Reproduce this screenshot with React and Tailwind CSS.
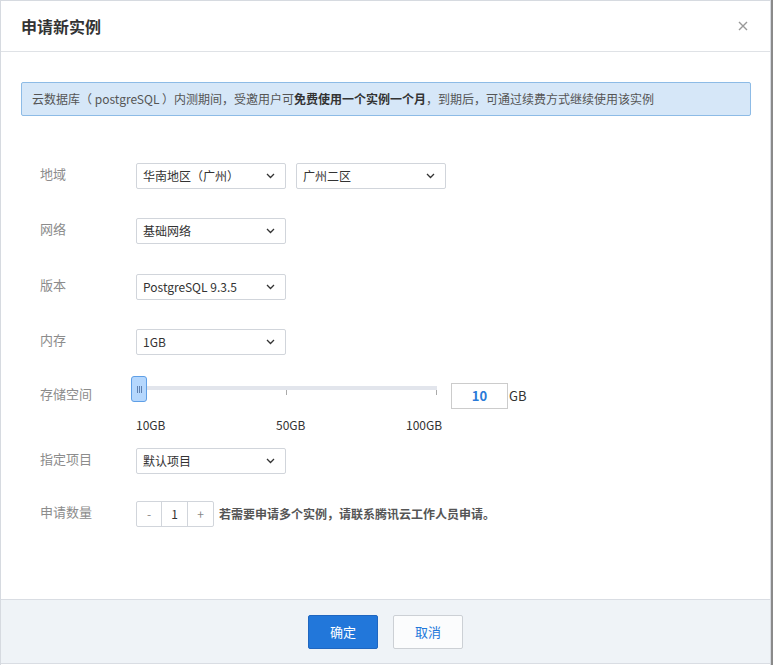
import React from "react";

const font = { fontFamily: '"Noto Sans CJK SC", "Noto Sans", sans-serif' };

function Chevron() {
  return (
    <svg width="9" height="6" viewBox="0 0 9 6" className="shrink-0">
      <path d="M1 1 L4.5 4.5 L8 1" fill="none" stroke="#333" strokeWidth="1.3" />
    </svg>
  );
}

function Select({ text, w = "w-[150px]" }) {
  return (
    <div className={`${w} h-[26px] border border-[#d1d5db] rounded-[2px] bg-white flex items-center justify-between pl-[6px] pr-[10px] text-[12px] text-[#333]`}>
      <span>{text}</span>
      <Chevron />
    </div>
  );
}

function Row({ label, children, className = "" }) {
  return (
    <div className={`flex items-center ${className}`}>
      <div className="w-[96px] text-[13px] text-[#8c8c8c] -mt-[4px]">{label}</div>
      {children}
    </div>
  );
}

export default function App() {
  return (
    <div className="flex bg-white" style={font}>
      <div className="w-[771px] h-[665px] border border-[#d6dae0] border-b-0 flex flex-col">
        <div className="h-[51px] border-b border-[#dfe2e6] flex items-center justify-between pl-[20px] pr-[22px] shrink-0">
          <span className="text-[16px] font-bold text-[#333] -mt-[1px]">申请新实例</span>
          <svg width="10" height="10" viewBox="0 0 10 10">
            <path d="M1 1 L9 9 M9 1 L1 9" stroke="#999" strokeWidth="1.4" />
          </svg>
        </div>
        <div className="h-[547px] pl-[20px] pr-[19px] pt-[30px] shrink-0">
          <div className="h-[34px] border border-[#8dbbe6] bg-[#d6e7f8] rounded-[2px] flex items-center pl-[10px] text-[12px] text-[#555]">
            <span>云数据库（ postgreSQL ）内测期间，受邀用户可</span>
            <span className="font-bold text-[#333]">免费使用一个实例一个月</span>
            <span>，到期后，可通过续费方式继续使用该实例</span>
          </div>
          <div className="pl-[19px] pt-[47px]">
            <Row label="地域" className="mb-[29px]">
              <div className="flex gap-[10px]">
                <Select text="华南地区（广州）" />
                <Select text="广州二区" />
              </div>
            </Row>
            <Row label="网络" className="mb-[30px]">
              <Select text="基础网络" />
            </Row>
            <Row label="版本" className="mb-[29px]">
              <Select text="PostgreSQL 9.3.5" />
            </Row>
            <Row label="内存" className="mb-[21px]">
              <Select text="1GB" />
            </Row>
            <div className="flex h-[72px]">
              <div className="w-[96px] text-[13px] text-[#8c8c8c] pt-[8px]">存储空间</div>
              <div className="flex flex-col">
                <div className="flex items-start">
                  <div className="relative w-[301px] h-[26px]">
                    <div className="absolute left-[10px] right-0 top-[10px] h-[4px] bg-[#e2e5ec]" />
                    <div className="absolute left-[150px] top-[14px] w-px h-[5px] bg-[#aaa]" />
                    <div className="absolute left-[300px] top-[14px] w-px h-[5px] bg-[#aaa]" />
                    <div className="absolute left-[-5px] top-0 w-[16px] h-[26px] rounded-[3px] bg-[#b5d7fd] border border-[#5f9fe6] flex items-center justify-center gap-[1px]">
                      <div className="w-px h-[7px] bg-[#5f80b0]" />
                      <div className="w-px h-[7px] bg-[#5f80b0]" />
                      <div className="w-px h-[7px] bg-[#5f80b0]" />
                    </div>
                  </div>
                  <div className="ml-[14px] mt-[7px] w-[57px] h-[26px] border border-[#ccc] flex items-center justify-center text-[13px] font-bold text-[#2a7ad8]">10</div>
                  <div className="ml-[1px] mt-[10px] text-[13px] text-[#333]">GB</div>
                </div>
                <div className="relative h-[20px] text-[12px] text-[#333] mt-[7px]">
                  <span className="absolute left-0">10GB</span>
                  <span className="absolute left-[140px]">50GB</span>
                  <span className="absolute left-[270px]">100GB</span>
                </div>
              </div>
            </div>
            <Row label="指定项目" className="mb-[27px]">
              <Select text="默认项目" />
            </Row>
            <Row label="申请数量">
              <div className="flex h-[26px] border border-[#d1d5db] rounded-[2px] text-[12px]">
                <div className="w-[25px] flex items-center justify-center text-[#888] border-r border-[#d1d5db]">-</div>
                <div className="w-[26px] flex items-center justify-center text-[#333] border-r border-[#d1d5db]">1</div>
                <div className="w-[25px] flex items-center justify-center text-[#888]">+</div>
              </div>
              <span className="ml-[5px] text-[12px] font-bold text-[#555]">若需要申请多个实例，请联系腾讯云工作人员申请。</span>
            </Row>
          </div>
        </div>
        <div className="h-[65px] border-t border-b border-[#d9dde3] bg-[#eff3f7] flex justify-center items-start pt-[15px] gap-[15px] shrink-0">
          <div className="w-[70px] h-[34px] rounded-[2px] bg-[#2277da] border border-[#1f66c0] text-white text-[13px] flex items-center justify-center">确定</div>
          <div className="w-[70px] h-[34px] rounded-[2px] bg-[#fbfcfd] border border-[#ccd0d5] text-[#2277da] text-[13px] flex items-center justify-center">取消</div>
        </div>
      </div>
      <div className="w-[2px] h-[665px] bg-[#8a8a8a]" />
    </div>
  );
}
